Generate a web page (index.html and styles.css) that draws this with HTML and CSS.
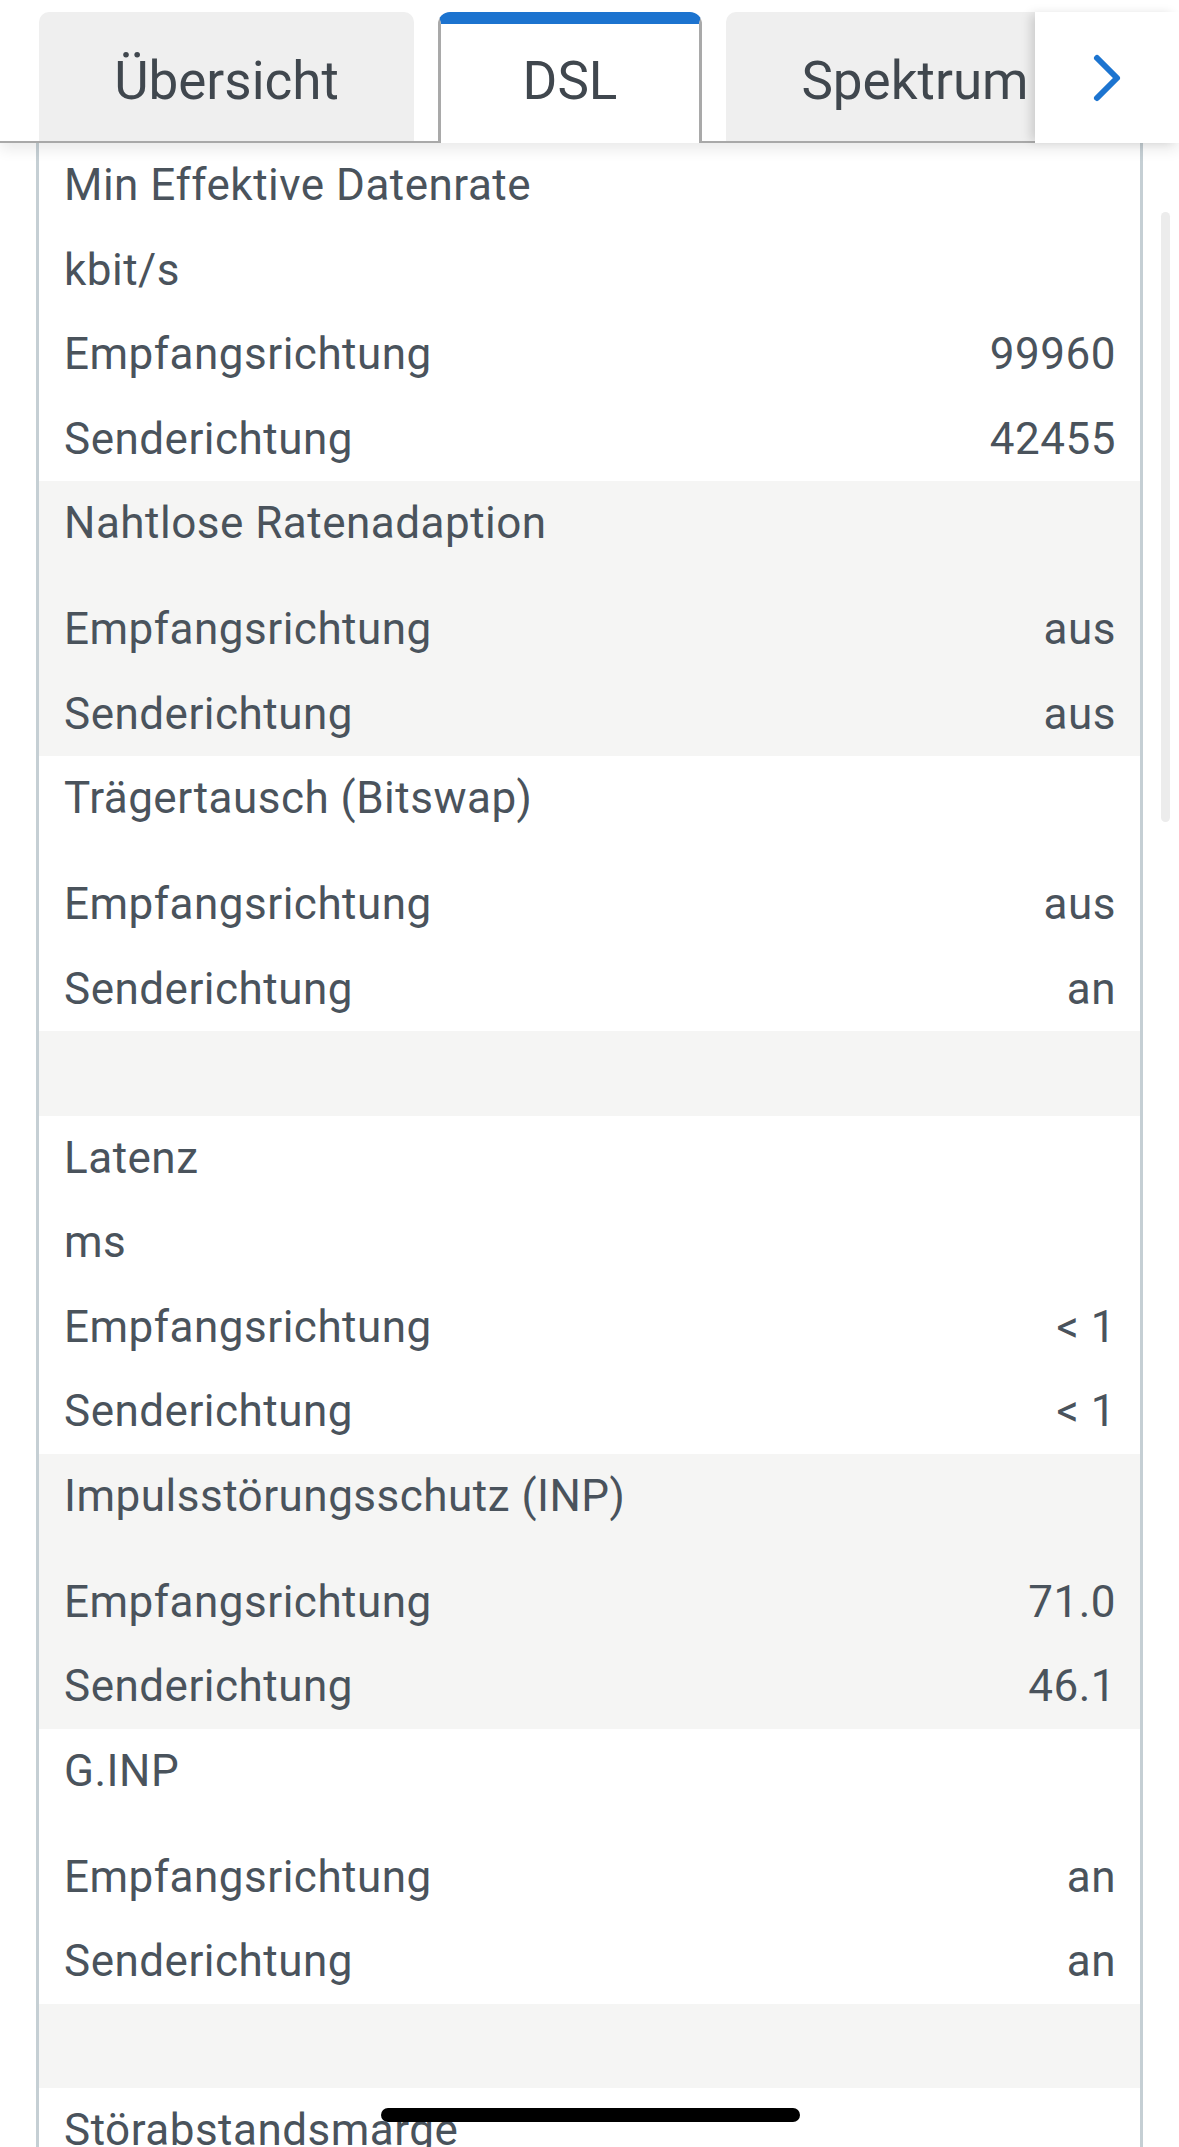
FILE: index.html
```html
<!DOCTYPE html>
<html lang="de">
<head>
<meta charset="utf-8">
<title>DSL</title>
<link rel="stylesheet" href="styles.css">
</head>
<body>
<header class="tabbar">
  <nav class="tabs">
    <div class="tab t1">Übersicht</div>
    <div class="tab active">DSL</div>
    <div class="tab t3">Spektrum</div>
  </nav>
  <div class="more">
    <svg width="30" height="50" viewBox="0 0 30 50"><polyline points="5,5 25,25 5,45" fill="none" stroke="#1c74d0" stroke-width="6" stroke-linecap="round" stroke-linejoin="round"/></svg>
  </div>
</header>
<main class="main">
  <div class="panel">
    <div class="grp">
      <div class="row">Min Effektive Datenrate</div>
      <div class="row">kbit/s</div>
      <div class="row"><span>Empfangsrichtung</span><span>99960</span></div>
      <div class="row"><span>Senderichtung</span><span>42455</span></div>
    </div>
    <div class="grp alt">
      <div class="row">Nahtlose Ratenadaption</div>
      <div class="row empty"></div>
      <div class="row"><span>Empfangsrichtung</span><span>aus</span></div>
      <div class="row"><span>Senderichtung</span><span>aus</span></div>
    </div>
    <div class="grp">
      <div class="row">Trägertausch (Bitswap)</div>
      <div class="row empty"></div>
      <div class="row"><span>Empfangsrichtung</span><span>aus</span></div>
      <div class="row"><span>Senderichtung</span><span>an</span></div>
    </div>
    <div class="grp alt spacer"></div>
    <div class="grp">
      <div class="row">Latenz</div>
      <div class="row">ms</div>
      <div class="row"><span>Empfangsrichtung</span><span>&lt; 1</span></div>
      <div class="row"><span>Senderichtung</span><span>&lt; 1</span></div>
    </div>
    <div class="grp alt">
      <div class="row">Impulsstörungsschutz (INP)</div>
      <div class="row empty"></div>
      <div class="row"><span>Empfangsrichtung</span><span>71.0</span></div>
      <div class="row"><span>Senderichtung</span><span>46.1</span></div>
    </div>
    <div class="grp">
      <div class="row">G.INP</div>
      <div class="row empty"></div>
      <div class="row"><span>Empfangsrichtung</span><span>an</span></div>
      <div class="row"><span>Senderichtung</span><span>an</span></div>
    </div>
    <div class="grp alt spacer"></div>
    <div class="grp">
      <div class="row">Störabstandsmarge</div>
    </div>
  </div>
  <div class="scroll"></div>
</main>
<div class="home"></div>
</body>
</html>
```

FILE: styles.css
```css
* { box-sizing: border-box; }
html, body { margin: 0; padding: 0; background: #fff; }
body {
  font-family: Roboto, "Noto Sans", sans-serif;
  color: #4a535c;
  height: 2147px;
  overflow: hidden;
}
.tabbar {
  display: flex;
  height: 143px;
  position: relative;
  z-index: 2;
  background: #fff;
  box-shadow: 0 6px 14px rgba(0, 0, 0, 0.09);
}
.tabs {
  flex: 1;
  min-width: 0;
  display: flex;
  align-items: flex-start;
  gap: 24px;
  padding: 12px 0 0 39px;
  overflow: hidden;
  background: linear-gradient(#a9a9a9, #a9a9a9) left bottom / 100% 2px no-repeat;
}
.tab {
  flex: none;
  height: 129px;
  border-radius: 10px 10px 0 0;
  background: #efefef;
  font-size: 53px;
  line-height: 61px;
  padding-top: 39px;
  text-align: center;
  color: #40474e;
  white-space: nowrap;
}
.tab.t1 { width: 375px; }
.tab.t3 { width: 378px; }
.tab.active {
  width: 264px;
  height: 131px;
  background: #fff;
  border: 3px solid #a9a9a9;
  border-top: 12px solid #1c73cf;
  border-bottom: 0;
  border-radius: 12px 12px 0 0;
  padding-top: 27px;
}
.more {
  flex: none;
  position: relative;
  z-index: 1;
  width: 144px;
  margin-top: 12px;
  background: #fff;
  display: flex;
  align-items: center;
  justify-content: center;
  box-shadow: -6px 0 10px -2px rgba(0, 0, 0, 0.15);
}
.main {
  display: flex;
  align-items: flex-start;
}
.panel {
  flex: none;
  margin-left: 36px;
  width: 1107px;
  border-left: 3px solid #c5cfd4;
  border-right: 3px solid #c5cfd4;
}
.grp { background: #fff; }
.grp.alt { background: #f5f5f4; }
.row {
  display: flex;
  justify-content: space-between;
  height: 84.5px;
  line-height: 84.5px;
  padding: 0 24px 0 25px;
  font-size: 44px;
  letter-spacing: 0.5px;
  white-space: nowrap;
}
.row.empty { height: 21.5px; padding: 0; }
.spacer { height: 84.5px; }
.scroll {
  flex: none;
  margin: 69px 0 0 18px;
  width: 9px;
  height: 610px;
  border-radius: 5px;
  background: #ececec;
}
.home {
  position: fixed;
  left: 381px;
  top: 2108px;
  width: 419px;
  height: 14px;
  border-radius: 7px;
  background: #000;
}
```
